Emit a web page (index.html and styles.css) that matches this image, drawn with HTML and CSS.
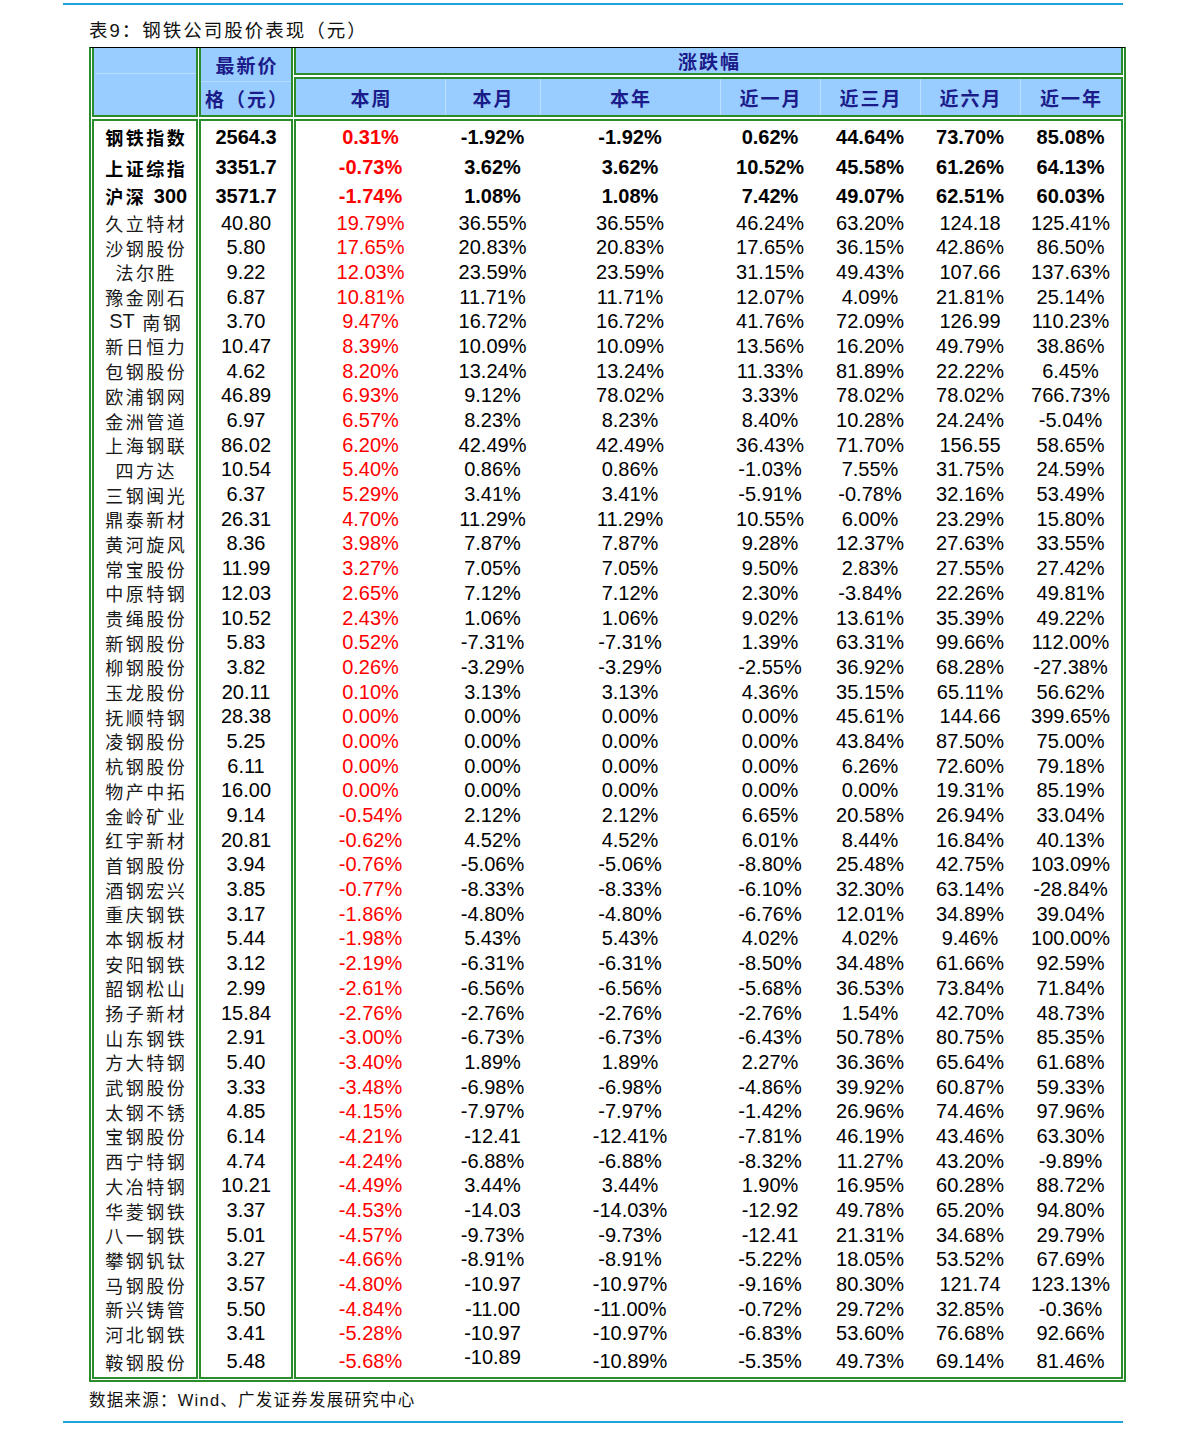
FILE: index.html
```html
<!DOCTYPE html>
<html lang="zh-CN">
<head>
<meta charset="utf-8">
<title>表9：钢铁公司股价表现（元）</title>
<link rel="stylesheet" href="styles.css">
</head>
<body>
<div class="page">
  <div class="rule"></div>
  <div class="title">表9：钢铁公司股价表现（元）</div>
  <div class="tbl">
    <div class="head">
      <div class="hc h-name"><span class="h-split"></span></div>
      <div class="hc h-price"><span class="h-line">最新价</span><span class="h-line">格（元）</span></div>
      <div class="hc h-chg">涨跌幅</div>
      <div class="hc h-p first">本周</div>
      <div class="hc h-p">本月</div>
      <div class="hc h-p">本年</div>
      <div class="hc h-p">近一月</div>
      <div class="hc h-p">近三月</div>
      <div class="hc h-p">近六月</div>
      <div class="hc h-p last">近一年</div>
    </div>
    <div class="body">
      <div class="row b r1 first"><div class="n">钢铁指数</div><div class="p">2564.3</div><div class="w">0.31%</div><div>-1.92%</div><div>-1.92%</div><div>0.62%</div><div>44.64%</div><div>73.70%</div><div>85.08%</div></div>
      <div class="row b r2"><div class="n">上证综指</div><div class="p">3351.7</div><div class="w">-0.73%</div><div>3.62%</div><div>3.62%</div><div>10.52%</div><div>45.58%</div><div>61.26%</div><div>64.13%</div></div>
      <div class="row b r3"><div class="n">沪深&nbsp;<span class="lat">300</span></div><div class="p">3571.7</div><div class="w">-1.74%</div><div>1.08%</div><div>1.08%</div><div>7.42%</div><div>49.07%</div><div>62.51%</div><div>60.03%</div></div>
      <div class="row"><div class="n">久立特材</div><div class="p">40.80</div><div class="w">19.79%</div><div>36.55%</div><div>36.55%</div><div>46.24%</div><div>63.20%</div><div>124.18</div><div>125.41%</div></div>
      <div class="row"><div class="n">沙钢股份</div><div class="p">5.80</div><div class="w">17.65%</div><div>20.83%</div><div>20.83%</div><div>17.65%</div><div>36.15%</div><div>42.86%</div><div>86.50%</div></div>
      <div class="row"><div class="n">法尔胜</div><div class="p">9.22</div><div class="w">12.03%</div><div>23.59%</div><div>23.59%</div><div>31.15%</div><div>49.43%</div><div>107.66</div><div>137.63%</div></div>
      <div class="row"><div class="n">豫金刚石</div><div class="p">6.87</div><div class="w">10.81%</div><div>11.71%</div><div>11.71%</div><div>12.07%</div><div>4.09%</div><div>21.81%</div><div>25.14%</div></div>
      <div class="row"><div class="n"><span class="lat">ST</span>&nbsp;南钢</div><div class="p">3.70</div><div class="w">9.47%</div><div>16.72%</div><div>16.72%</div><div>41.76%</div><div>72.09%</div><div>126.99</div><div>110.23%</div></div>
      <div class="row"><div class="n">新日恒力</div><div class="p">10.47</div><div class="w">8.39%</div><div>10.09%</div><div>10.09%</div><div>13.56%</div><div>16.20%</div><div>49.79%</div><div>38.86%</div></div>
      <div class="row"><div class="n">包钢股份</div><div class="p">4.62</div><div class="w">8.20%</div><div>13.24%</div><div>13.24%</div><div>11.33%</div><div>81.89%</div><div>22.22%</div><div>6.45%</div></div>
      <div class="row"><div class="n">欧浦钢网</div><div class="p">46.89</div><div class="w">6.93%</div><div>9.12%</div><div>78.02%</div><div>3.33%</div><div>78.02%</div><div>78.02%</div><div>766.73%</div></div>
      <div class="row"><div class="n">金洲管道</div><div class="p">6.97</div><div class="w">6.57%</div><div>8.23%</div><div>8.23%</div><div>8.40%</div><div>10.28%</div><div>24.24%</div><div>-5.04%</div></div>
      <div class="row"><div class="n">上海钢联</div><div class="p">86.02</div><div class="w">6.20%</div><div>42.49%</div><div>42.49%</div><div>36.43%</div><div>71.70%</div><div>156.55</div><div>58.65%</div></div>
      <div class="row"><div class="n">四方达</div><div class="p">10.54</div><div class="w">5.40%</div><div>0.86%</div><div>0.86%</div><div>-1.03%</div><div>7.55%</div><div>31.75%</div><div>24.59%</div></div>
      <div class="row"><div class="n">三钢闽光</div><div class="p">6.37</div><div class="w">5.29%</div><div>3.41%</div><div>3.41%</div><div>-5.91%</div><div>-0.78%</div><div>32.16%</div><div>53.49%</div></div>
      <div class="row"><div class="n">鼎泰新材</div><div class="p">26.31</div><div class="w">4.70%</div><div>11.29%</div><div>11.29%</div><div>10.55%</div><div>6.00%</div><div>23.29%</div><div>15.80%</div></div>
      <div class="row"><div class="n">黄河旋风</div><div class="p">8.36</div><div class="w">3.98%</div><div>7.87%</div><div>7.87%</div><div>9.28%</div><div>12.37%</div><div>27.63%</div><div>33.55%</div></div>
      <div class="row"><div class="n">常宝股份</div><div class="p">11.99</div><div class="w">3.27%</div><div>7.05%</div><div>7.05%</div><div>9.50%</div><div>2.83%</div><div>27.55%</div><div>27.42%</div></div>
      <div class="row"><div class="n">中原特钢</div><div class="p">12.03</div><div class="w">2.65%</div><div>7.12%</div><div>7.12%</div><div>2.30%</div><div>-3.84%</div><div>22.26%</div><div>49.81%</div></div>
      <div class="row"><div class="n">贵绳股份</div><div class="p">10.52</div><div class="w">2.43%</div><div>1.06%</div><div>1.06%</div><div>9.02%</div><div>13.61%</div><div>35.39%</div><div>49.22%</div></div>
      <div class="row"><div class="n">新钢股份</div><div class="p">5.83</div><div class="w">0.52%</div><div>-7.31%</div><div>-7.31%</div><div>1.39%</div><div>63.31%</div><div>99.66%</div><div>112.00%</div></div>
      <div class="row"><div class="n">柳钢股份</div><div class="p">3.82</div><div class="w">0.26%</div><div>-3.29%</div><div>-3.29%</div><div>-2.55%</div><div>36.92%</div><div>68.28%</div><div>-27.38%</div></div>
      <div class="row"><div class="n">玉龙股份</div><div class="p">20.11</div><div class="w">0.10%</div><div>3.13%</div><div>3.13%</div><div>4.36%</div><div>35.15%</div><div>65.11%</div><div>56.62%</div></div>
      <div class="row"><div class="n">抚顺特钢</div><div class="p">28.38</div><div class="w">0.00%</div><div>0.00%</div><div>0.00%</div><div>0.00%</div><div>45.61%</div><div>144.66</div><div>399.65%</div></div>
      <div class="row"><div class="n">凌钢股份</div><div class="p">5.25</div><div class="w">0.00%</div><div>0.00%</div><div>0.00%</div><div>0.00%</div><div>43.84%</div><div>87.50%</div><div>75.00%</div></div>
      <div class="row"><div class="n">杭钢股份</div><div class="p">6.11</div><div class="w">0.00%</div><div>0.00%</div><div>0.00%</div><div>0.00%</div><div>6.26%</div><div>72.60%</div><div>79.18%</div></div>
      <div class="row"><div class="n">物产中拓</div><div class="p">16.00</div><div class="w">0.00%</div><div>0.00%</div><div>0.00%</div><div>0.00%</div><div>0.00%</div><div>19.31%</div><div>85.19%</div></div>
      <div class="row"><div class="n">金岭矿业</div><div class="p">9.14</div><div class="w">-0.54%</div><div>2.12%</div><div>2.12%</div><div>6.65%</div><div>20.58%</div><div>26.94%</div><div>33.04%</div></div>
      <div class="row"><div class="n">红宇新材</div><div class="p">20.81</div><div class="w">-0.62%</div><div>4.52%</div><div>4.52%</div><div>6.01%</div><div>8.44%</div><div>16.84%</div><div>40.13%</div></div>
      <div class="row"><div class="n">首钢股份</div><div class="p">3.94</div><div class="w">-0.76%</div><div>-5.06%</div><div>-5.06%</div><div>-8.80%</div><div>25.48%</div><div>42.75%</div><div>103.09%</div></div>
      <div class="row"><div class="n">酒钢宏兴</div><div class="p">3.85</div><div class="w">-0.77%</div><div>-8.33%</div><div>-8.33%</div><div>-6.10%</div><div>32.30%</div><div>63.14%</div><div>-28.84%</div></div>
      <div class="row"><div class="n">重庆钢铁</div><div class="p">3.17</div><div class="w">-1.86%</div><div>-4.80%</div><div>-4.80%</div><div>-6.76%</div><div>12.01%</div><div>34.89%</div><div>39.04%</div></div>
      <div class="row"><div class="n">本钢板材</div><div class="p">5.44</div><div class="w">-1.98%</div><div>5.43%</div><div>5.43%</div><div>4.02%</div><div>4.02%</div><div>9.46%</div><div>100.00%</div></div>
      <div class="row"><div class="n">安阳钢铁</div><div class="p">3.12</div><div class="w">-2.19%</div><div>-6.31%</div><div>-6.31%</div><div>-8.50%</div><div>34.48%</div><div>61.66%</div><div>92.59%</div></div>
      <div class="row"><div class="n">韶钢松山</div><div class="p">2.99</div><div class="w">-2.61%</div><div>-6.56%</div><div>-6.56%</div><div>-5.68%</div><div>36.53%</div><div>73.84%</div><div>71.84%</div></div>
      <div class="row"><div class="n">扬子新材</div><div class="p">15.84</div><div class="w">-2.76%</div><div>-2.76%</div><div>-2.76%</div><div>-2.76%</div><div>1.54%</div><div>42.70%</div><div>48.73%</div></div>
      <div class="row"><div class="n">山东钢铁</div><div class="p">2.91</div><div class="w">-3.00%</div><div>-6.73%</div><div>-6.73%</div><div>-6.43%</div><div>50.78%</div><div>80.75%</div><div>85.35%</div></div>
      <div class="row"><div class="n">方大特钢</div><div class="p">5.40</div><div class="w">-3.40%</div><div>1.89%</div><div>1.89%</div><div>2.27%</div><div>36.36%</div><div>65.64%</div><div>61.68%</div></div>
      <div class="row"><div class="n">武钢股份</div><div class="p">3.33</div><div class="w">-3.48%</div><div>-6.98%</div><div>-6.98%</div><div>-4.86%</div><div>39.92%</div><div>60.87%</div><div>59.33%</div></div>
      <div class="row"><div class="n">太钢不锈</div><div class="p">4.85</div><div class="w">-4.15%</div><div>-7.97%</div><div>-7.97%</div><div>-1.42%</div><div>26.96%</div><div>74.46%</div><div>97.96%</div></div>
      <div class="row"><div class="n">宝钢股份</div><div class="p">6.14</div><div class="w">-4.21%</div><div>-12.41</div><div>-12.41%</div><div>-7.81%</div><div>46.19%</div><div>43.46%</div><div>63.30%</div></div>
      <div class="row"><div class="n">西宁特钢</div><div class="p">4.74</div><div class="w">-4.24%</div><div>-6.88%</div><div>-6.88%</div><div>-8.32%</div><div>11.27%</div><div>43.20%</div><div>-9.89%</div></div>
      <div class="row"><div class="n">大冶特钢</div><div class="p">10.21</div><div class="w">-4.49%</div><div>3.44%</div><div>3.44%</div><div>1.90%</div><div>16.95%</div><div>60.28%</div><div>88.72%</div></div>
      <div class="row"><div class="n">华菱钢铁</div><div class="p">3.37</div><div class="w">-4.53%</div><div>-14.03</div><div>-14.03%</div><div>-12.92</div><div>49.78%</div><div>65.20%</div><div>94.80%</div></div>
      <div class="row"><div class="n">八一钢铁</div><div class="p">5.01</div><div class="w">-4.57%</div><div>-9.73%</div><div>-9.73%</div><div>-12.41</div><div>21.31%</div><div>34.68%</div><div>29.79%</div></div>
      <div class="row"><div class="n">攀钢钒钛</div><div class="p">3.27</div><div class="w">-4.66%</div><div>-8.91%</div><div>-8.91%</div><div>-5.22%</div><div>18.05%</div><div>53.52%</div><div>67.69%</div></div>
      <div class="row"><div class="n">马钢股份</div><div class="p">3.57</div><div class="w">-4.80%</div><div>-10.97</div><div>-10.97%</div><div>-9.16%</div><div>80.30%</div><div>121.74</div><div>123.13%</div></div>
      <div class="row"><div class="n">新兴铸管</div><div class="p">5.50</div><div class="w">-4.84%</div><div>-11.00</div><div>-11.00%</div><div>-0.72%</div><div>29.72%</div><div>32.85%</div><div>-0.36%</div></div>
      <div class="row"><div class="n">河北钢铁</div><div class="p">3.41</div><div class="w">-5.28%</div><div>-10.97</div><div>-10.97%</div><div>-6.83%</div><div>53.60%</div><div>76.68%</div><div>92.66%</div></div>
      <div class="row rl last"><div class="n">鞍钢股份</div><div class="p">5.48</div><div class="w">-5.68%</div><div class="up2">-10.89</div><div>-10.89%</div><div>-5.35%</div><div>49.73%</div><div>69.14%</div><div>81.46%</div></div>
    </div>
  </div>
  <div class="src">数据来源：Wind、广发证券发展研究中心</div>
  <div class="rule"></div>
</div>
</body>
</html>
```

FILE: styles.css
```css
* {
  box-sizing: border-box;
}

body {
  margin: 0;
  background: #ffffff;
  color: #000000;
  font-family: "Liberation Sans", "Noto Sans CJK SC", sans-serif;
}

.page {
  width: 1191px;
  padding-top: 3px;
}

.rule {
  margin-left: 63px;
  width: 1060px;
  height: 2px;
  background: #1ea3dd;
}

.title {
  margin-left: 89px;
  padding-top: 10px;
  height: 42px;
  line-height: 32px;
  font-size: 18.5px;
  letter-spacing: 2px;
  color: #111111;
}

.tbl {
  margin-left: 89px;
  width: 1037px;
  border-top: 1px solid #000000;
  border-left: 2px solid #2a8c2a;
  border-right: 2px solid #2a8c2a;
  border-bottom: 2px solid #2a8c2a;
  padding: 0 1px 1px 1px;
}

.head,
.row {
  display: grid;
  grid-template-columns: 106px 95px 152px 95px 180px 100px 100px 100px 103px;
}

.head {
  grid-template-rows: 27px 40px;
  row-gap: 2px;
  margin-bottom: 2px;
}

.hc {
  background: #99ccff;
  color: #1b1b8a;
  font-family: "Noto Sans CJK SC", sans-serif;
  font-weight: 700;
  font-size: 19px;
  letter-spacing: 2px;
  padding-left: 2px;
  display: flex;
  align-items: center;
  justify-content: center;
  white-space: nowrap;
}

.h-name {
  grid-column: 1;
  grid-row: 1 / 3;
  border: 2px solid #2a8c2a;
  border-top: 0;
  align-items: stretch;
}

.h-split {
  width: 100%;
  height: 26px;
  border-bottom: 1px solid rgba(255, 255, 255, 0.35);
}

.h-price {
  grid-column: 2;
  grid-row: 1 / 3;
  margin-left: 1px;
  border: 2px solid #2a8c2a;
  border-top: 0;
  flex-direction: column;
  align-items: stretch;
  padding-left: 0;
}

.h-line {
  flex: 1;
  display: flex;
  align-items: center;
  justify-content: center;
  padding-left: 2px;
}

.h-line + .h-line {
  border-top: 1px solid rgba(255, 255, 255, 0.3);
}

.h-chg {
  grid-column: 3 / 10;
  grid-row: 1;
  margin-left: 1px;
  border: 2px solid #2a8c2a;
  border-top: 0;
}

.h-p {
  grid-row: 2;
  border-top: 2px solid #2a8c2a;
  border-bottom: 2px solid #2a8c2a;
  box-shadow: inset 1px 0 0 rgba(255, 255, 255, 0.35);
}

.h-p.first {
  margin-left: 1px;
  border-left: 2px solid #2a8c2a;
  box-shadow: none;
}

.h-p.last {
  border-right: 2px solid #2a8c2a;
}

.row {
  height: 24.7px;
}

.row > div {
  display: flex;
  align-items: center;
  justify-content: center;
  font-size: 20px;
  white-space: nowrap;
}

.row > .n {
  border-left: 2px solid #2a8c2a;
  border-right: 2px solid #2a8c2a;
  font-size: 18px;
  letter-spacing: 2.5px;
  padding-left: 2.5px;
  color: #1a1a1a;
}

.row > .n .lat {
  font-size: 20px;
  letter-spacing: 0;
}

.row > .p {
  margin-left: 1px;
  border-left: 2px solid #2a8c2a;
  border-right: 2px solid #2a8c2a;
}

.row > .w {
  margin-left: 1px;
  border-left: 2px solid #2a8c2a;
  color: #ff0000;
}

.row > div:last-child {
  border-right: 2px solid #2a8c2a;
}

.row.first > div {
  border-top: 2px solid #2a8c2a;
}

.row.last > div {
  border-bottom: 2px solid #2a8c2a;
}

.row.b {
  font-weight: 700;
}

.row.b > .n {
  color: #000000;
}

.r1 {
  height: 34px;
}

.r2 {
  height: 29px;
}

.r3 {
  height: 28px;
}

.rl {
  height: 33.8px;
}

.row > .up2 {
  padding-bottom: 8px;
}

.src {
  margin-left: 89px;
  padding-top: 2px;
  height: 34px;
  line-height: 32px;
  font-size: 16.5px;
  letter-spacing: 1.25px;
  color: #111111;
}

.src + .rule {
  margin-top: 5px;
}
```
